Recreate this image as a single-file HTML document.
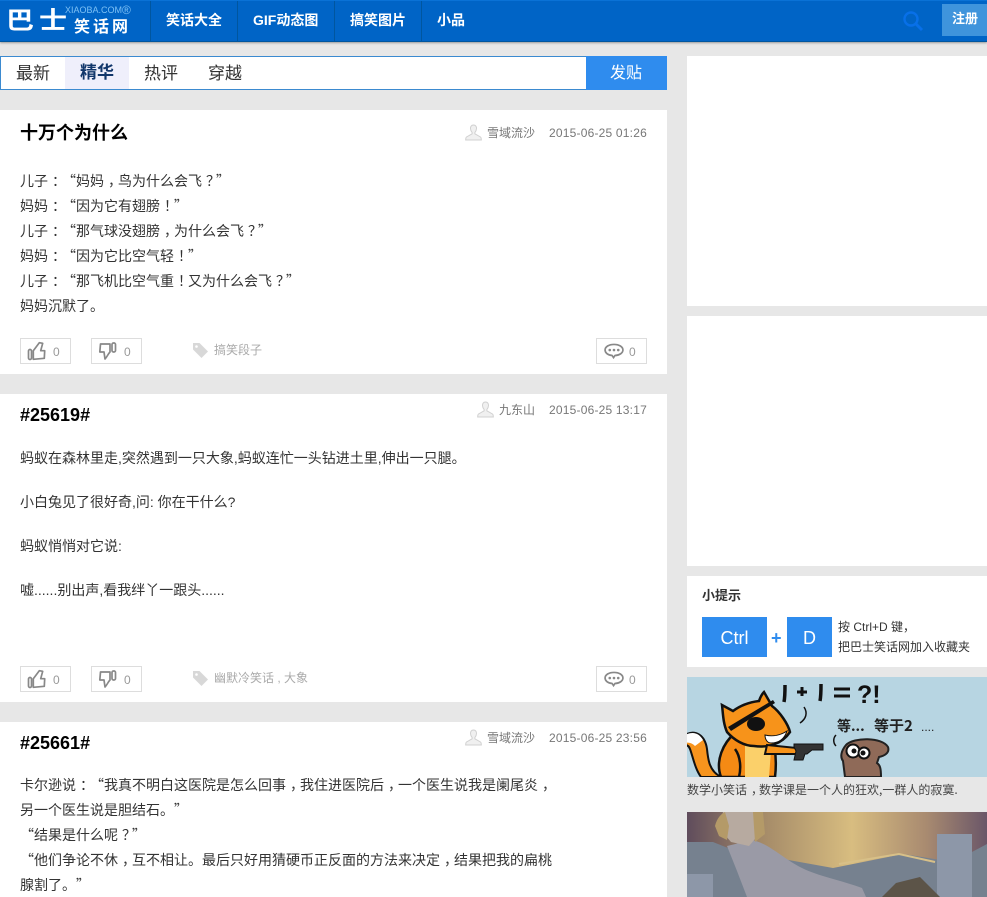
<!DOCTYPE html>
<html lang="zh"><head><meta charset="utf-8"><title>巴士笑话网</title>
<style>
*{margin:0;padding:0;box-sizing:border-box;text-spacing-trim:space-all}
html,body{width:987px;height:897px;overflow:hidden;background:#e7e7e7}
body{position:relative;font-family:"Liberation Sans","Noto Sans CJK SC",sans-serif;color:#333}
.a{position:absolute;white-space:nowrap}
.w{position:absolute;background:#fff}
.nav{position:absolute;left:0;top:0;width:987px;height:42px;background:#0064c6;border-top:1px solid #0a72d6;border-bottom:1px solid #00569f;box-shadow:0 1px 2px #999}
.sep{position:absolute;top:0;width:1px;height:40px;background:#00569f}
.n{position:absolute;top:11px;color:#fff;font-size:14px;font-weight:bold;line-height:18px;white-space:nowrap}
.t{position:absolute;font-size:17px;line-height:24px;top:62px;white-space:nowrap;color:#333}
.h{position:absolute;left:20px;font-size:18px;font-weight:bold;color:#000;line-height:24px;white-space:nowrap}
.m{position:absolute;font-size:12px;color:#777;line-height:16px;white-space:nowrap}
.d{letter-spacing:.2px}
.p{position:absolute;left:20px;font-size:14px;line-height:25px;color:#333;white-space:nowrap}
.s{font-family:"Noto Sans CJK SC",sans-serif}
.p i,.cap i{font-style:normal;position:relative;left:4px}
.btn{position:absolute;width:51px;height:26px;background:#fff;border:1px solid #ddd}
.c{position:absolute;font-size:12px;color:#999;line-height:14px}
.tg{position:absolute;font-size:12px;color:#aaa;line-height:16px;white-space:nowrap}
svg{position:absolute;overflow:visible}
</style></head><body>

<div class="nav">
<div class="sep" style="left:150px"></div><div class="sep" style="left:237px"></div><div class="sep" style="left:334px"></div><div class="sep" style="left:421px"></div>
</div>
<div class="a" style="left:6px;top:6px;font-size:28px;line-height:30px;color:#fff;transform:scaleY(.85);font-weight:bold">巴</div>
<div class="a" style="left:39px;top:6px;font-size:28px;line-height:30px;color:#fff;transform:scaleY(.85);font-weight:bold">士</div>
<div class="a" style="left:65px;top:4px;font-size:9px;line-height:12px;color:#7cc0f5">XIAOBA.COM</div>
<div class="a" style="left:122px;top:3px;font-size:12px;line-height:14px;color:#7cc0f5">®</div>
<div class="a" style="left:74px;top:18px;font-size:16px;line-height:20px;color:#fff;letter-spacing:3px;font-weight:bold">笑话网</div>
<div class="n" style="left:166px">笑话大全</div>
<div class="n" style="left:253px">GIF动态图</div>
<div class="n" style="left:350px">搞笑图片</div>
<div class="n" style="left:437px">小品</div>
<svg style="left:902px;top:10px" width="22" height="22" viewBox="0 0 22 22" fill="none" stroke="#0870e8"><circle cx="9" cy="9" r="6.500" stroke-width="2.400"/><path d="M14 14l6 6" stroke-width="3"/></svg>
<div class="a" style="left:942px;top:4px;width:45px;height:32px;background:#3f94dc"></div>
<div class="a" style="left:952px;top:10px;font-size:13px;line-height:17px;color:#fff;font-weight:bold">注册</div>

<div class="w" style="left:0;top:56px;width:587px;height:34px;border:1px solid #3b8ad0"></div>
<div class="a" style="left:65px;top:57px;width:64px;height:32px;background:#efeffb"></div>
<div class="t" style="left:16px">最新</div>
<div class="t" style="left:80px;top:61px;font-weight:bold;color:#12376b">精华</div>
<div class="t" style="left:144px">热评</div>
<div class="t" style="left:208px">穿越</div>
<div class="a" style="left:586px;top:56px;width:81px;height:34px;background:#2f8cee"></div>
<div class="a" style="left:610px;top:62px;font-size:16px;line-height:24px;color:#fff">发贴</div>

<!-- post 1 -->
<div class="w" style="left:0;top:110px;width:667px;height:264px"></div>
<div class="h" style="top:121px">十万个为什么</div>
<svg style="left:465px;top:124px" width="17" height="17" viewBox="0 0 17 17"><path d="M8.500 1C6.400 1 5.400 2.600 5.500 4.600c.1 1.700.9 3 1.600 3.800v1.400L1.500 13c-.6.4-.8 1.200-.8 3h15.600c0-1.800-.2-2.600-.8-3l-5.600-3.200V8.400c.7-.8 1.500-2.100 1.600-3.800C11.600 2.600 10.600 1 8.500 1z" fill="#f0f0f0" stroke="#d0d0d0"/></svg>
<div class="m" style="left:487px;top:125px">雪域流沙</div>
<div class="m d" style="left:549px;top:125px">2015-06-25 01:26</div>
<div class="p s" style="top:169px">儿子<i>：</i>“妈妈<i>，</i>鸟为什么会飞<i>？</i>”<br>妈妈<i>：</i>“因为它有翅膀<i>！</i>”<br>儿子<i>：</i>“那气球没翅膀<i>，</i>为什么会飞<i>？</i>”<br>妈妈<i>：</i>“因为它比空气轻<i>！</i>”<br>儿子<i>：</i>“那飞机比空气重<i>！</i>又为什么会飞<i>？</i>”<br>妈妈沉默了。</div>
<div class="btn" style="left:20px;top:338px"></div>
<div class="btn" style="left:91px;top:338px"></div>
<svg style="left:28px;top:341px" width="20" height="20" viewBox="0 0 20 20" fill="none" stroke="#888" stroke-width="1.700"><rect x=".5" y="8.500" width="3" height="10" rx="1.500"/><path d="M5.300 9.700L11.300 1.700L14.700 2.300L12.700 9.700H16.700L16.300 17.300L5.300 18.300z" stroke-linejoin="round"/></svg>
<div class="c" style="left:53px;top:345px">0</div>
<svg style="left:99px;top:341px" width="20" height="20" viewBox="0 0 20 20" fill="none" stroke="#888" stroke-width="1.700"><rect x="13" y="2" width="3.500" height="9" rx="1.500"/><path d="M11 3H1.500L.8 11H5L6 18c2-2 3-5 5-7z" stroke-linejoin="round"/></svg>
<div class="c" style="left:124px;top:345px">0</div>
<svg style="left:192px;top:342px" width="17" height="17" viewBox="0 0 17 17"><path d="M1 1h6.500L16 9.500 9.500 16 1 7.500z" fill="#d8d8d8"/><circle cx="4.500" cy="4.500" r="1.300" fill="#fff"/></svg>
<div class="tg" style="left:214px;top:342px">搞笑段子</div>
<div class="btn" style="left:596px;top:338px"></div>
<svg style="left:604px;top:343px" width="20" height="16" viewBox="0 0 21 17"><path d="M10.500 1.500C5 1.500 1 4 1 7.500c0 3 3 5.300 7.500 5.800l1.500 2.200 1.500-2.200c5-.3 8.500-2.800 8.500-5.800 0-3.500-4-6-9.500-6z" fill="#fff" stroke="#888" stroke-width="1.800"/><circle cx="6" cy="7.500" r="1.400" fill="#888"/><circle cx="10.500" cy="7.500" r="1.400" fill="#888"/><circle cx="15" cy="7.500" r="1.400" fill="#888"/></svg>
<div class="c" style="left:629px;top:345px">0</div>

<!-- post 2 -->
<div class="w" style="left:0;top:394px;width:667px;height:308px"></div>
<div class="h" style="top:403px">#25619#</div>
<svg style="left:477px;top:401px" width="17" height="17" viewBox="0 0 17 17"><path d="M8.500 1C6.400 1 5.400 2.600 5.500 4.600c.1 1.700.9 3 1.600 3.800v1.400L1.500 13c-.6.4-.8 1.200-.8 3h15.600c0-1.800-.2-2.600-.8-3l-5.600-3.200V8.400c.7-.8 1.500-2.100 1.600-3.800C11.600 2.600 10.600 1 8.500 1z" fill="#f0f0f0" stroke="#d0d0d0"/></svg>
<div class="m" style="left:499px;top:402px">九东山</div>
<div class="m d" style="left:549px;top:402px">2015-06-25 13:17</div>
<div class="p" style="top:446px;line-height:24px">蚂蚁在森林里走,突然遇到一只大象,蚂蚁连忙一头钻进土里,伸出一只腿。</div>
<div class="p" style="top:490px;line-height:24px">小白兔见了很好奇,问: 你在干什么?</div>
<div class="p" style="top:534px;line-height:24px">蚂蚁悄悄对它说:</div>
<div class="p" style="top:578px;line-height:24px">嘘......别出声,看我绊丫一跟头......</div>
<div class="btn" style="left:20px;top:666px"></div>
<div class="btn" style="left:91px;top:666px"></div>
<svg style="left:28px;top:669px" width="20" height="20" viewBox="0 0 20 20" fill="none" stroke="#888" stroke-width="1.700"><rect x=".5" y="8.500" width="3" height="10" rx="1.500"/><path d="M5.300 9.700L11.300 1.700L14.700 2.300L12.700 9.700H16.700L16.300 17.300L5.300 18.300z" stroke-linejoin="round"/></svg>
<div class="c" style="left:53px;top:673px">0</div>
<svg style="left:99px;top:669px" width="20" height="20" viewBox="0 0 20 20" fill="none" stroke="#888" stroke-width="1.700"><rect x="13" y="2" width="3.500" height="9" rx="1.500"/><path d="M11 3H1.500L.8 11H5L6 18c2-2 3-5 5-7z" stroke-linejoin="round"/></svg>
<div class="c" style="left:124px;top:673px">0</div>
<svg style="left:192px;top:670px" width="17" height="17" viewBox="0 0 17 17"><path d="M1 1h6.500L16 9.500 9.500 16 1 7.500z" fill="#d8d8d8"/><circle cx="4.500" cy="4.500" r="1.300" fill="#fff"/></svg>
<div class="tg" style="left:214px;top:670px">幽默冷笑话 , 大象</div>
<div class="btn" style="left:596px;top:666px"></div>
<svg style="left:604px;top:671px" width="20" height="16" viewBox="0 0 21 17"><path d="M10.500 1.500C5 1.500 1 4 1 7.500c0 3 3 5.300 7.500 5.800l1.500 2.200 1.500-2.200c5-.3 8.500-2.800 8.500-5.800 0-3.500-4-6-9.500-6z" fill="#fff" stroke="#888" stroke-width="1.800"/><circle cx="6" cy="7.500" r="1.400" fill="#888"/><circle cx="10.500" cy="7.500" r="1.400" fill="#888"/><circle cx="15" cy="7.500" r="1.400" fill="#888"/></svg>
<div class="c" style="left:629px;top:673px">0</div>

<!-- post 3 -->
<div class="w" style="left:0;top:722px;width:667px;height:175px"></div>
<div class="h" style="top:731px">#25661#</div>
<svg style="left:465px;top:729px" width="17" height="17" viewBox="0 0 17 17"><path d="M8.500 1C6.400 1 5.400 2.600 5.500 4.600c.1 1.700.9 3 1.600 3.800v1.400L1.500 13c-.6.4-.8 1.200-.8 3h15.600c0-1.800-.2-2.600-.8-3l-5.600-3.200V8.400c.7-.8 1.500-2.100 1.600-3.800C11.600 2.600 10.600 1 8.500 1z" fill="#f0f0f0" stroke="#d0d0d0"/></svg>
<div class="m" style="left:487px;top:730px">雪域流沙</div>
<div class="m d" style="left:549px;top:730px">2015-06-25 23:56</div>
<div class="p s" style="top:773px">卡尔逊说<i>：</i>“我真不明白这医院是怎么回事<i>，</i>我住进医院后<i>，</i>一个医生说我是阑尾炎<i>，</i><br>另一个医生说是胆结石。”<br>“结果是什么呢<i>？</i>”<br>“他们争论不休<i>，</i>互不相让。最后只好用猜硬币正反面的方法来决定<i>，</i>结果把我的扁桃<br>腺割了。”</div>

<!-- sidebar -->
<div class="w" style="left:687px;top:56px;width:300px;height:250px"></div>
<div class="w" style="left:687px;top:316px;width:300px;height:250px"></div>
<div class="w" style="left:687px;top:576px;width:300px;height:91px"></div>
<div class="a" style="left:702px;top:588px;font-size:13px;line-height:16px;font-weight:bold;color:#333">小提示</div>
<div class="a" style="left:702px;top:617px;width:65px;height:40px;background:#2f8cee;color:#fff;font-size:18px;line-height:42px;text-align:center">Ctrl</div>
<div class="a" style="left:771px;top:627px;font-size:18px;line-height:22px;font-weight:bold;color:#2f8cee">+</div>
<div class="a" style="left:787px;top:617px;width:45px;height:40px;background:#2f8cee;color:#fff;font-size:18px;line-height:42px;text-align:center">D</div>
<div class="a" style="left:838px;top:617px;font-size:12px;line-height:20px;color:#333">按 Ctrl+D 键，<br>把巴士笑话网加入收藏夹</div>

<svg style="left:687px;top:677px;overflow:hidden" width="300" height="100" viewBox="0 0 300 100">
<rect width="300" height="100" fill="#b7d5e2"/>
<path d="M-2 58c10-6 20 0 22 14 1 10 2 22 14 28H14C8 92 6 80 3 72c-1-3-3-4-5-4z" fill="#f7941d" stroke="#111" stroke-width="2"/>
<path d="M-2 58c8-4 14-2 18 5l-8 6c-3-3-6-4-10-3z" fill="#fff"/>
<path d="M34 100C28 84 36 66 48 56l36-2c4 14 6 30 4 46z" fill="#f58a14" stroke="#111" stroke-width="2.500"/>
<path d="M58 66c12-4 22 0 26 8l-2 26H58z" fill="#fbd06a"/>
<path d="M48 72c6 8 6 20 4 28" fill="none" stroke="#111" stroke-width="2.500"/>
<path d="M40 55C36 46 36 36 35 28l11 6c8-6 18-9 26-10 1-3 3-7 5-9l8 14c8 6 16 18 18 26-8 12-22 16-36 14-10 0-20-6-27-14z" fill="#f7931a" stroke="#111" stroke-width="2.500"/>
<path d="M44 54l44-28-2-3-45 27z" fill="#111"/><ellipse cx="69" cy="47" rx="9" ry="7" fill="#111"/>
<path d="M78 58c8 2 16 0 22-4-2 6-6 12-16 12-4 0-6-4-6-8z" fill="#fff" stroke="#111"/>
<path d="M80 68l30 3 2 6-34 0z" fill="#f7931a" stroke="#111" stroke-width="2"/>
<path d="M107 67h29v6h-11l-5 4-2 0-2 6h-9l2-9-2-4z" fill="#333" stroke="#111"/>
<path d="M98 8c0 6 0 12-1 17" stroke="#111" stroke-width="3.500" fill="none"/>
<path d="M115 10l0 9M110 15h10" stroke="#111" stroke-width="3" fill="none"/>
<path d="M134 7c0 6 0 12-1 17" stroke="#111" stroke-width="3.500" fill="none"/>
<path d="M147 12h16M147 19h16" stroke="#111" stroke-width="3" fill="none"/>
<text x="170" y="26" font-family="Liberation Sans,sans-serif" font-size="25" font-weight="bold" fill="#111">?!</text>
<path d="M117 30c4 6 2 12-4 16" stroke="#111" stroke-width="1.500" fill="none"/>
<text x="150" y="54" font-family="Noto Sans CJK SC,sans-serif" font-size="14" font-weight="bold" fill="#222">等...</text>
<text x="187" y="54" font-family="Noto Sans CJK SC,sans-serif" font-size="15" font-weight="bold" fill="#222">等于2</text>
<text x="234" y="54" font-family="Liberation Sans,sans-serif" font-size="12" fill="#222">....</text>
<path d="M159 68c8-8 36-8 42 2 2 6-4 9-9 10l-2 6c3 2 4 5 4 14h-36l-2-16c-3-4-2-10 3-16z" fill="#8f6a58" stroke="#222" stroke-width="2"/>
<circle cx="166" cy="74" r="6.500" fill="#fff" stroke="#111" stroke-width="2"/><circle cx="177" cy="76" r="5.500" fill="#fff" stroke="#111" stroke-width="2"/>
<circle cx="167" cy="74" r="2.500" fill="#111"/><circle cx="176" cy="76" r="2.500" fill="#111"/>
<path d="M149 58c-3 3-3 8 0 11" stroke="#111" stroke-width="1.500" fill="none"/>
</svg>
<div class="a cap" style="left:687px;top:781px;font-size:12px;line-height:18px;color:#444;font-family:'Noto Sans CJK SC',sans-serif">数学小笑话<i>，</i>数学课是一个人的狂欢,一群人的寂寞.</div>

<svg style="left:687px;top:812px;overflow:hidden" width="300" height="85" viewBox="0 0 300 85">
<defs><linearGradient id="g" x1="0" x2="1" y1="0" y2="0"><stop offset="0" stop-color="#5f4c5c"/><stop offset=".25" stop-color="#a48a68"/><stop offset=".55" stop-color="#d8bd80"/><stop offset=".8" stop-color="#a88a70"/><stop offset="1" stop-color="#6a5668"/></linearGradient></defs>
<rect width="300" height="85" fill="url(#g)"/>
<path d="M0 30h26l20 8 100 18 70-14 50 8 34-18v53H0z" fill="#76818f"/>
<path d="M0 62h26v23H0zM250 22h35v63h-35z" fill="#8d97a8"/>
<path d="M152 52l60-10 36 8" fill="none" stroke="#d8c088" stroke-width="2"/>
<path d="M40 34l25-6c18 4 30 18 50 28 16 8 38 12 60 20l4 9H60l-10-26z" fill="#9a9aa6"/>
<path d="M36 0h40l-2 20-12 14-18-4-12-14z" fill="#b7aaa0"/>
<path d="M28 14C30 6 34 2 38 0l4 14-2 14-8-4zM66 0h10l2 22-10 8z" fill="#b49a68"/>
<path d="M195 85l14-14 24-6 20 20z" fill="#5c5448"/>
</svg>
</body></html>
